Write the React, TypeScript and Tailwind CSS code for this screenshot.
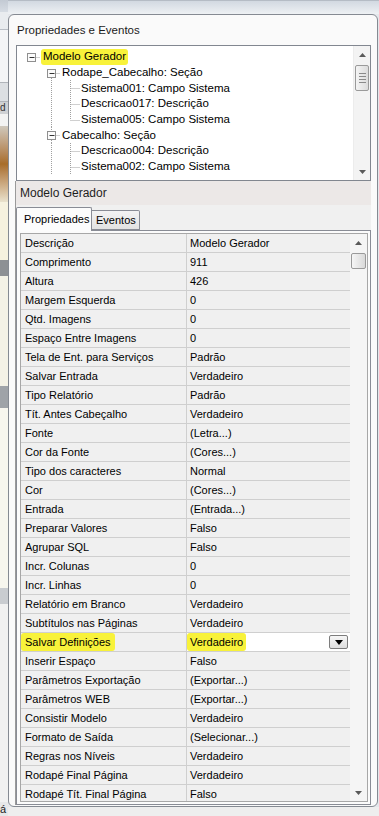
import React from "react";

type TreeRow = {
  depth: number;
  text: string;
  kind: "box" | "mid" | "last";
  up?: boolean;
  down?: boolean;
  v: number[];
  hl?: boolean;
};

const treeRows: TreeRow[] = [
  { depth: 0, text: "Modelo Gerador", kind: "box", v: [], hl: true },
  { depth: 1, text: "Rodape_Cabecalho: Seção", kind: "box", down: true, v: [] },
  { depth: 2, text: "Sistema001: Campo Sistema", kind: "mid", v: [1] },
  { depth: 2, text: "Descricao017: Descrição", kind: "mid", v: [1] },
  { depth: 2, text: "Sistema005: Campo Sistema", kind: "last", v: [1] },
  { depth: 1, text: "Cabecalho: Seção", kind: "box", up: true, down: true, v: [] },
  { depth: 2, text: "Descricao004: Descrição", kind: "mid", v: [1] },
  { depth: 2, text: "Sistema002: Campo Sistema", kind: "mid", v: [1] },
];

const props: [string, string][] = [
  ["Descrição", "Modelo Gerador"],
  ["Comprimento", "911"],
  ["Altura", "426"],
  ["Margem Esquerda", "0"],
  ["Qtd. Imagens", "0"],
  ["Espaço Entre Imagens", "0"],
  ["Tela de Ent. para Serviços", "Padrão"],
  ["Salvar Entrada", "Verdadeiro"],
  ["Tipo Relatório", "Padrão"],
  ["Tít. Antes Cabeçalho", "Verdadeiro"],
  ["Fonte", "(Letra...)"],
  ["Cor da Fonte", "(Cores...)"],
  ["Tipo dos caracteres", "Normal"],
  ["Cor", "(Cores...)"],
  ["Entrada", "(Entrada...)"],
  ["Preparar Valores", "Falso"],
  ["Agrupar SQL", "Falso"],
  ["Incr. Colunas", "0"],
  ["Incr. Linhas", "0"],
  ["Relatório em Branco", "Verdadeiro"],
  ["Subtítulos nas Páginas", "Verdadeiro"],
  ["Salvar Definições", "Verdadeiro"],
  ["Inserir Espaço", "Falso"],
  ["Parâmetros Exportação", "(Exportar...)"],
  ["Parâmetros WEB", "(Exportar...)"],
  ["Consistir Modelo", "Verdadeiro"],
  ["Formato de Saída", "(Selecionar...)"],
  ["Regras nos Níveis", "Verdadeiro"],
  ["Rodapé Final Página", "Verdadeiro"],
  ["Rodapé Tít. Final Página", "Falso"],
];

const cx = (d: number) => Math.round(14 + 19.5 * d) + 0.5;

const Dots = ({ x1, y1, x2, y2 }: { x1: number; y1: number; x2: number; y2: number }) => (
  <line x1={x1} y1={y1} x2={x2} y2={y2} stroke="#a0a0a0" strokeWidth={1} strokeDasharray="1 1" />
);

const Connector = ({ row }: { row: TreeRow }) => {
  const h = 16;
  const c = cx(row.depth);
  const w = Math.floor(c) + 10;
  const my = 8.5;
  return (
    <svg width={w} height={h} className="shrink-0">
      {row.v.map((col) => (
        <Dots key={col} x1={cx(col)} y1={0} x2={cx(col)} y2={h} />
      ))}
      {row.kind === "box" ? (
        <>
          {row.up && <Dots x1={c} y1={0} x2={c} y2={4} />}
          {row.down && <Dots x1={c} y1={13} x2={c} y2={h} />}
          <Dots x1={c + 5} y1={my} x2={c + 9} y2={my} />
          <rect x={c - 4} y={4.5} width={8} height={8} fill="#fbfbfb" stroke="#8f8f8f" />
          <line x1={c - 2} y1={my} x2={c + 3} y2={my} stroke="#333" />
        </>
      ) : (
        <>
          <Dots x1={c} y1={0} x2={c} y2={row.kind === "mid" ? h : my} />
          <Dots x1={c + 1} y1={my} x2={c + 10} y2={my} />
        </>
      )}
    </svg>
  );
};

const Arrow = ({ up }: { up?: boolean }) => (
  <svg width="7" height="4">
    <polygon points={up ? "3.5,0 7,4 0,4" : "0,0 7,0 3.5,4"} fill="#5a5a5a" />
  </svg>
);

const LeftStrip = () => (
  <div className="w-[8px] shrink-0 flex flex-col">
    <div className="h-[12px] bg-gradient-to-b from-[#c3cad3] to-[#d6dce3]" />
    <div className="h-[18px] bg-[#e9ecef] border-b border-[#b9bec5]" />
    <div className="h-[52px] bg-[#f4f5f6]" />
    <div className="h-[20px] bg-[#dcdfe2] border-y border-[#b0b4b9]" />
    <div className="h-[12px] bg-[#cfd1d4] text-[10px] leading-[12px] text-[#333] overflow-hidden">d</div>
    <div className="h-[12px] bg-[#f3f3f3]" />
    <div className="h-[76px] bg-gradient-to-b from-[#cfc8bc] via-[#a86d28] to-[#e9e2cd]" />
    <div className="h-[58px] bg-[#f6f2df]" />
    <div className="h-[16px] bg-[#8d9094]" />
    <div className="h-[110px] bg-[#f4f2e6]" />
    <div className="h-[22px] bg-[#9fa3a8]" />
    <div className="h-[180px] bg-[#f7f6ee]" />
    <div className="h-[16px] bg-[#c9ccd0]" />
    <div className="flex-1 bg-[#f1f1f1]" />
    <div className="h-[14px] bg-[#e6e7e8] text-[11px] leading-[14px] text-[#222] overflow-hidden">á</div>
  </div>
);

export default function App() {
  return (
    <div className="w-[379px] h-[816px] flex overflow-hidden bg-[#e4e7eb] font-['Liberation_Sans',Arial,sans-serif] text-black">
      <LeftStrip />
      <div className="flex-1 flex flex-col">
        <div className="h-[14px] shrink-0 bg-gradient-to-b from-[#d2d9e1] to-[#eef1f4] border-t border-[#b5bcc5]" />
        <div className="w-[370px] h-[793px] shrink-0 rounded-[6px] border border-[#858a92] bg-[#fafafa] flex flex-col pl-[7px] pr-[6px] pb-[1px]">
          <div className="h-[30px] shrink-0 flex items-center pt-[2px] text-[11.5px] text-[#1b1b1b] pl-[1px]">
            Propriedades e Eventos
          </div>

          <div className="h-[136px] shrink-0 border border-[#828790] bg-white flex">
            <div className="flex-1 pt-[3px] overflow-hidden">
              {treeRows.map((r, i) => (
                <div key={i} className="h-[15.7px] flex items-center text-[11.5px] whitespace-nowrap">
                  <Connector row={r} />
                  {r.hl ? (
                    <span className="h-[16px] flex items-center px-[2px] bg-[#f8f23a] rounded-[3px]">{r.text}</span>
                  ) : (
                    <span className="pl-[1px]">{r.text}</span>
                  )}
                </div>
              ))}
            </div>
            <div className="w-[17px] bg-[#f3f3f3] flex flex-col border-l border-[#ececec]">
              <div className="h-[17px] flex items-center justify-center">
                <Arrow up />
              </div>
              <div className="flex-1 pt-[2px] px-[1px]">
                <div className="h-[26px] rounded-[2px] border border-[#9a9a9a] bg-gradient-to-r from-[#f4f4f4] to-[#dcdcdc] flex flex-col items-center justify-center gap-[2px]">
                  <div className="w-[7px] h-px bg-[#8a8a8a]" />
                  <div className="w-[7px] h-px bg-[#8a8a8a]" />
                  <div className="w-[7px] h-px bg-[#8a8a8a]" />
                  <div className="w-[7px] h-px bg-[#8a8a8a]" />
                </div>
              </div>
              <div className="h-[17px] flex items-center justify-center">
                <Arrow />
              </div>
            </div>
          </div>

          <div className="flex-1 min-h-0 flex flex-col bg-[#f0f0f0] -ml-[1px] border-l border-[#9a9a9a]">
            <div className="h-[24px] shrink-0 bg-[#ece8e7] flex items-center pl-[4px] text-[12px] text-[#1e1e1e]">
              Modelo Gerador
            </div>
            <div className="h-[2px] shrink-0" />
            <div className="h-[23px] shrink-0 flex items-end text-[11px]">
              <div className="relative z-10 h-[24px] -mb-px w-[76px] border border-b-0 border-[#898c95] bg-[#fcfcfc] flex items-start pt-[3px] pl-[7px] rounded-t-[2px]">
                Propriedades
              </div>
              <div className="h-[20px] w-[48px] border border-l-0 border-[#898c95] bg-gradient-to-b from-[#f3f3f3] to-[#e2e2e2] flex items-center pl-[4px] rounded-tr-[2px]">
                Eventos
              </div>
            </div>
            <div className="flex-1 min-h-0 border border-[#898c95] bg-[#fbfbfb] pt-[2px] pl-[3px] pr-[2px] pb-[2px] flex flex-col">
              <div className="flex-1 min-h-0 border border-[#a7a7a7] bg-[#f0f0f0] flex overflow-hidden">
                <div className="flex-1 flex flex-col text-[11px]">
                  {props.map(([k, v], i) => {
                    const hl = k === "Salvar Definições";
                    return (
                      <div key={i} className="h-[19px] shrink-0 flex border-b border-[#cfcfcf]">
                        <div className="w-[166px] shrink-0 border-r border-[#cfcfcf] flex items-center whitespace-nowrap overflow-hidden">
                          {hl ? (
                            <span className="h-[18px] flex items-center px-[4px] bg-[#f8f23a] rounded-[3px]">{k}</span>
                          ) : (
                            <span className="pl-[4px]">{k}</span>
                          )}
                        </div>
                        <div className={"flex-1 flex items-center whitespace-nowrap " + (hl ? "bg-white" : "")}>
                          {hl ? (
                            <>
                              <span className="h-[18px] flex items-center px-[3px] bg-[#f8f23a] rounded-[3px]">{v}</span>
                              <div className="ml-auto mr-[2px] w-[19px] h-[14px] rounded-[2px] border border-[#7d7d7d] bg-gradient-to-b from-[#f7f7f7] to-[#dedede] flex items-center justify-center">
                                <svg width="8" height="5">
                                  <polygon points="0,0 8,0 4,5" fill="#000" />
                                </svg>
                              </div>
                            </>
                          ) : (
                            <span className="pl-[3px]">{v}</span>
                          )}
                        </div>
                      </div>
                    );
                  })}
                </div>
                <div className="w-[17px] shrink-0 bg-[#f5f5f5] flex flex-col">
                  <div className="h-[18px] shrink-0 flex items-center justify-center">
                    <Arrow up />
                  </div>
                  <div className="flex-1 px-[1px] pt-px">
                    <div className="h-[16px] rounded-[2px] border border-[#9a9a9a] bg-gradient-to-r from-[#f6f6f6] to-[#d9d9d9]" />
                  </div>
                  <div className="h-[17px] shrink-0 flex items-center justify-center">
                    <Arrow />
                  </div>
                </div>
              </div>
            </div>
          </div>
        </div>
        <div className="flex-1 bg-[#eeeeee]" />
      </div>
    </div>
  );
}
